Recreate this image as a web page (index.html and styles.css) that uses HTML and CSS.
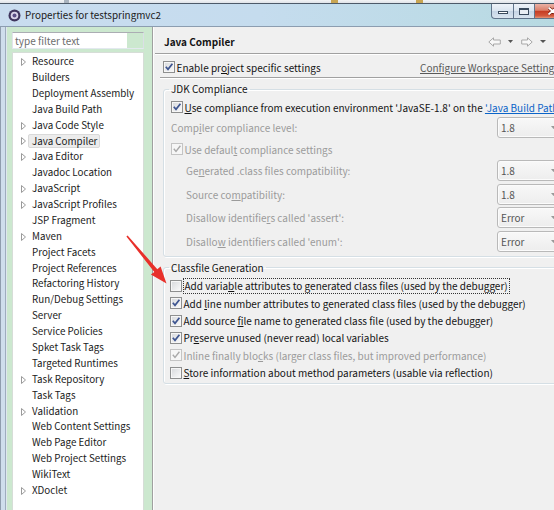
FILE: index.html
```html
<!DOCTYPE html>
<html>
<head>
<meta charset="utf-8">
<link rel="stylesheet" href="styles.css">
</head>
<body>
<div class="win">
  <div class="strip"><span class="tk tk1"></span><span class="tk tk2"></span><span class="tk tk3"></span></div>
  <div class="titlebar">
    <svg class="appicon" width="13" height="13" viewBox="0 0 13 13"><circle cx="6.5" cy="6.5" r="6" fill="#3f355e"/><circle cx="6.5" cy="6.5" r="3.8" fill="#d9d4ea"/><circle cx="6.5" cy="6.5" r="2" fill="#5b4f86"/></svg>
    <span class="title">Properties for testspringmvc2</span>
    <div class="ctrls">
      <span class="btn min"><span class="minbar"></span></span>
      <span class="btn max"><span class="maxbox"></span></span>
      <span class="btn close"><svg width="9" height="8" viewBox="0 0 9 8"><path d="M1 1 L8 7 M8 1 L1 7" stroke="#7a1d10" stroke-width="3.2" stroke-linecap="round"/><path d="M1 1 L8 7 M8 1 L1 7" stroke="#fff" stroke-width="1.8" stroke-linecap="round"/></svg></span>
    </div>
  </div>
  <div class="client">
    <div class="frame-l"></div>
    <div class="left">
      <div class="filter"><span class="ph">type filter text</span><span class="clr"></span></div>
      <ul class="tree">
        <li><svg class="tw" viewBox="0 0 5 8"><path d="M0.5 0.5 L4.5 4 L0.5 7.5 Z" fill="#fff" stroke="#9a9a9a"/></svg>Resource</li>
        <li><span class="tw"></span>Builders</li>
        <li><span class="tw"></span>Deployment Assembly</li>
        <li><span class="tw"></span>Java Build Path</li>
        <li><svg class="tw" viewBox="0 0 5 8"><path d="M0.5 0.5 L4.5 4 L0.5 7.5 Z" fill="#fff" stroke="#9a9a9a"/></svg>Java Code Style</li>
        <li><svg class="tw" viewBox="0 0 5 8"><path d="M0.5 0.5 L4.5 4 L0.5 7.5 Z" fill="#fff" stroke="#9a9a9a"/></svg><span class="sel">Java Compiler</span></li>
        <li><svg class="tw" viewBox="0 0 5 8"><path d="M0.5 0.5 L4.5 4 L0.5 7.5 Z" fill="#fff" stroke="#9a9a9a"/></svg>Java Editor</li>
        <li><span class="tw"></span>Javadoc Location</li>
        <li><svg class="tw" viewBox="0 0 5 8"><path d="M0.5 0.5 L4.5 4 L0.5 7.5 Z" fill="#fff" stroke="#9a9a9a"/></svg>JavaScript</li>
        <li><svg class="tw" viewBox="0 0 5 8"><path d="M0.5 0.5 L4.5 4 L0.5 7.5 Z" fill="#fff" stroke="#9a9a9a"/></svg>JavaScript Profiles</li>
        <li><span class="tw"></span>JSP Fragment</li>
        <li><svg class="tw" viewBox="0 0 5 8"><path d="M0.5 0.5 L4.5 4 L0.5 7.5 Z" fill="#fff" stroke="#9a9a9a"/></svg>Maven</li>
        <li><span class="tw"></span>Project Facets</li>
        <li><span class="tw"></span>Project References</li>
        <li><span class="tw"></span>Refactoring History</li>
        <li><span class="tw"></span>Run/Debug Settings</li>
        <li><span class="tw"></span>Server</li>
        <li><span class="tw"></span>Service Policies</li>
        <li><span class="tw"></span>Spket Task Tags</li>
        <li><span class="tw"></span>Targeted Runtimes</li>
        <li><svg class="tw" viewBox="0 0 5 8"><path d="M0.5 0.5 L4.5 4 L0.5 7.5 Z" fill="#fff" stroke="#9a9a9a"/></svg>Task Repository</li>
        <li><span class="tw"></span>Task Tags</li>
        <li><svg class="tw" viewBox="0 0 5 8"><path d="M0.5 0.5 L4.5 4 L0.5 7.5 Z" fill="#fff" stroke="#9a9a9a"/></svg>Validation</li>
        <li><span class="tw"></span>Web Content Settings</li>
        <li><span class="tw"></span>Web Page Editor</li>
        <li><span class="tw"></span>Web Project Settings</li>
        <li><span class="tw"></span>WikiText</li>
        <li><svg class="tw" viewBox="0 0 5 8"><path d="M0.5 0.5 L4.5 4 L0.5 7.5 Z" fill="#fff" stroke="#9a9a9a"/></svg>XDoclet</li>
      </ul>
    </div>
    <div class="sash"></div>
    <div class="right">
      <div class="head">
        <span class="htitle">Java Compiler</span>
        <span class="nav">
          <svg width="13" height="10" viewBox="0 0 13 10"><path d="M0.8 5 L5.5 0.8 V3 H12.3 V7 H5.5 V9.2 Z" fill="#f8f8f8" stroke="#a8a8a8"/></svg>
          <svg class="dd1" width="5" height="3" viewBox="0 0 5 3"><path d="M0 0 H5 L2.5 3 Z" fill="#555"/></svg>
          <svg class="fwd" width="12" height="10" viewBox="0 0 12 10"><path d="M11.2 5 L6.5 0.8 V3 H0.7 V7 H6.5 V9.2 Z" fill="#f8f8f8" stroke="#a8a8a8"/></svg>
          <svg class="dd2" width="6" height="3" viewBox="0 0 6 3"><path d="M0 0 H6 L3 3 Z" fill="#555"/></svg>
        </span>
      </div>
      <div class="body">
        <div class="enable">
          <span class="cbrow"><span class="cb on"><svg viewBox="0 0 10 10"><path d="M1.8 4.8 L4 7.4 L8.4 1.8" fill="none" stroke="#3e5590" stroke-width="1.7"/></svg></span>Enable pr<u>o</u>ject specific settings</span>
          <span class="link">Configure Workspace Settings...</span>
        </div>
        <div class="sep"></div>
        <fieldset class="grp jdk">
          <legend>JDK Compliance</legend>
          <div class="cbrow r1"><span class="cb on"><svg viewBox="0 0 10 10"><path d="M1.8 4.8 L4 7.4 L8.4 1.8" fill="none" stroke="#3e5590" stroke-width="1.7"/></svg></span><span><u>U</u>se compliance from execution environment 'JavaSE-1.8' on the <span class="blue">'Java Build Path'.</span></span></div>
          <div class="crow r2"><span class="dis">Comp<u>i</u>ler compliance level:</span><span class="combo">1.8<svg class="carr" width="5" height="3" viewBox="0 0 5 3"><path d="M0 0 H5 L2.5 3 Z" fill="#999"/></svg></span></div>
          <div class="cbrow r3"><span class="cb dcb"><svg viewBox="0 0 10 10"><path d="M1.8 4.8 L4 7.4 L8.4 1.8" fill="none" stroke="#a9a9a9" stroke-width="1.4"/></svg></span><span class="dis">Use defaul<u>t</u> compliance settings</span></div>
          <div class="crow r4"><span class="dis ind">Ge<u>n</u>erated .class files compatibility:</span><span class="combo">1.8<svg class="carr" width="5" height="3" viewBox="0 0 5 3"><path d="M0 0 H5 L2.5 3 Z" fill="#999"/></svg></span></div>
          <div class="crow r5"><span class="dis ind">Source co<u>m</u>patibility:</span><span class="combo">1.8<svg class="carr" width="5" height="3" viewBox="0 0 5 3"><path d="M0 0 H5 L2.5 3 Z" fill="#999"/></svg></span></div>
          <div class="crow r5"><span class="dis ind">Disallow identifie<u>r</u>s called 'assert':</span><span class="combo">Error<svg class="carr" width="5" height="3" viewBox="0 0 5 3"><path d="M0 0 H5 L2.5 3 Z" fill="#999"/></svg></span></div>
          <div class="crow r5"><span class="dis ind">Disallo<u>w</u> identifiers called 'enum':</span><span class="combo">Error<svg class="carr" width="5" height="3" viewBox="0 0 5 3"><path d="M0 0 H5 L2.5 3 Z" fill="#999"/></svg></span></div>
        </fieldset>
        <fieldset class="grp cls">
          <legend>Classfile Generation</legend>
          <div class="cbrow c1"><span class="cb"></span><span class="focus">Add varia<u>b</u>le attributes to generated class files (used by the debugger)</span></div>
          <div class="cbrow cn"><span class="cb on"><svg viewBox="0 0 10 10"><path d="M1.8 4.8 L4 7.4 L8.4 1.8" fill="none" stroke="#3e5590" stroke-width="1.7"/></svg></span><span>Add <u>l</u>ine number attributes to generated class files (used by the debugger)</span></div>
          <div class="cbrow cn"><span class="cb on"><svg viewBox="0 0 10 10"><path d="M1.8 4.8 L4 7.4 L8.4 1.8" fill="none" stroke="#3e5590" stroke-width="1.7"/></svg></span><span>Add source <u>f</u>ile name to generated class file (used by the debugger)</span></div>
          <div class="cbrow cn"><span class="cb on"><svg viewBox="0 0 10 10"><path d="M1.8 4.8 L4 7.4 L8.4 1.8" fill="none" stroke="#3e5590" stroke-width="1.7"/></svg></span><span>Pr<u>e</u>serve unused (never read) local variables</span></div>
          <div class="cbrow cn"><span class="cb dcb"><svg viewBox="0 0 10 10"><path d="M1.8 4.8 L4 7.4 L8.4 1.8" fill="none" stroke="#a9a9a9" stroke-width="1.4"/></svg></span><span class="dis">Inline finally blo<u>c</u>ks (larger class files, but improved performance)</span></div>
          <div class="cbrow cn"><span class="cb"></span><span><u>S</u>tore information about method parameters (usable via reflection)</span></div>
        </fieldset>
      </div>
    </div>
  </div>
  <svg class="arrow" width="60" height="62" viewBox="120 228 60 62"><polygon points="127.6,235.4 157.3,269.2 160.6,266.6 166.5,283.5 150.9,274.6 154.3,271.9 126.4,236.6" fill="#e8302a"/></svg>
</div>
</body>
</html>
```
FILE: styles.css
```css
body {
  margin: 0;
  overflow: hidden;
  font-family: "Noto Sans CJK SC", "Noto Sans", sans-serif;
  font-size: 10px;
  color: #141414;
}
.win {
  position: relative;
  width: 554px;
  height: 510px;
  overflow: hidden;
  background: #f0f0f0;
}
.strip {
  height: 3px;
  display: flex;
  background: linear-gradient(#f3f4f6, #dfe3e8);
  border-bottom: 1px solid #4d5a69;
}
.tk { height: 3px; width: 7px; background: #c8a552; }
.tk1 { margin-left: 64px; width: 5px; background: #a9b3be; }
.tk2 { margin-left: 262px; }
.tk3 { margin-left: 78px; }
.titlebar {
  width: 577px;
  height: 23px;
  box-sizing: border-box;
  display: flex;
  align-items: center;
  padding-left: 8px;
  background: linear-gradient(to right, #c9dcef 0%, #c5dcee 45%, #bcdbe6 80%, #b6d9e0 100%);
  border-bottom: 1px solid #8c9db0;
}
.appicon { margin-right: 4px; flex: none; }
.title { line-height: 16px; color: #1a1a1a; font-size: 9.9px; }
.ctrls {
  margin-left: auto;
  align-self: flex-start;
  display: flex;
  height: 15px;
}
.btn {
  box-sizing: border-box;
  height: 15px;
  border: 1px solid #61748b;
  border-top: none;
  display: flex;
  justify-content: center;
  background: linear-gradient(#eef3f9, #dbe5f0 48%, #c6d5e6 52%, #d9e4ef);
}
.min { width: 23px; border-radius: 0 0 0 4px; align-items: flex-end; padding-bottom: 4px; }
.max { width: 21px; border-left: none; align-items: center; }
.close {
  width: 42px;
  border-left: none;
  border-radius: 0 0 4px 0;
  align-items: center;
  justify-content: flex-start;
  padding-left: 13px;
  background: linear-gradient(#eab1a5, #dc7f6a 45%, #c63d24 52%, #d3593d 85%, #e5987a);
}
.minbar { width: 10px; height: 3px; box-sizing: border-box; border: 1px solid #3a4a5d; background: #fff; }
.maxbox { width: 10px; height: 7px; box-sizing: border-box; border: 1px solid #3a4a5d; border-top-width: 2px; background: #e9eef4; }
.client { display: flex; height: 483px; }
.frame-l {
  width: 7px;
  flex: none;
  background: linear-gradient(to right, #8f9dad 0 1px, #cfdeec 1px 5px, #9eadbd 5px 6px, #dfe7ee 6px 7px);
}
.left {
  width: 145px;
  flex: none;
  box-sizing: border-box;
  background: #cce8cf;
  padding: 5px 8px 0 5px;
}
.filter {
  height: 17px;
  box-sizing: border-box;
  border: 1px solid #abadb3;
  border-color: #abadb3 #dbdfe6 #e3e9ef #e2e3ea;
  background: #fff;
  display: flex;
  align-items: center;
}
.ph { flex: 1; padding-left: 2px; color: #6d6d6d; line-height: 15px; }
.clr { width: 16px; height: 15px; background: #cce8cf; }
.tree {
  margin: 3px 0 0;
  padding: 1px 0 0;
  list-style: none;
  background: #fff;
  border: 1px solid #d6ddd7;
  height: 470px;
}
.tree li {
  height: 15.9px;
  line-height: 15.9px;
  display: flex;
  align-items: center;
  padding-left: 8px;
  white-space: nowrap;
  color: #1b1b1b;
  font-size: 9.8px;
}
.tw { width: 5px; height: 8px; margin-right: 6px; flex: none; }
.sel {
  background: #ececec;
  border: 1px solid #d9d9d9;
  border-radius: 2px;
  margin-left: -4px;
  padding: 0 2px 0 3px;
  line-height: 12px;
}
.sash {
  width: 3px;
  flex: none;
  background: linear-gradient(to right, #a0a0a0 0 1px, #fdfdfd 1px 2px, #f0f0f0 2px);
}
.right { flex: 1; min-width: 0; overflow: hidden; background: #f0f0f0; }
.head {
  height: 27px;
  box-sizing: border-box;
  padding: 3px 8px 0 9px;
  display: flex;
  align-items: center;
  border-bottom: 1px solid #a0a0a0;
}
.htitle { font-weight: bold; }
.nav { margin-left: auto; display: flex; align-items: center; }
.dd1 { margin-left: 7px; }
.fwd { margin-left: 8px; }
.dd2 { margin-left: 7px; }
.body { border-top: 1px solid #fff; padding-left: 8px; }
.enable {
  margin-top: 4px;
  height: 16px;
  display: grid;
  grid-template-columns: 257px auto;
  align-items: center;
  white-space: nowrap;
}
.link { color: #595959; text-decoration: underline; }
.sep { margin: 2px 0 0 -3px; border-top: 1px solid #a0a0a0; border-bottom: 1px solid #fff; }
.grp {
  margin: 2px 0 0;
  padding: 0 0 4px 7px;
  border: 1px solid #d5dfe5;
  border-radius: 3px;
  width: 440px;
  min-width: 0;
  box-shadow: inset 1px 1px 0 #fff, 1px 1px 0 #fff;
}
.grp legend { padding: 0 2px; margin-left: -2px; line-height: 16px; }
.cls { margin-top: 3px; padding: 0 0 2px 6px; }
.cls legend { margin-left: -1px; }
.cbrow { display: flex; align-items: center; height: 16px; white-space: nowrap; }
.crow {
  display: grid;
  grid-template-columns: 326px 64px;
  align-items: center;
  height: 21px;
  white-space: nowrap;
}
.r1 { margin-top: 2px; }
.r2 { margin-top: 2px; }
.r3 { margin-top: 3px; }
.r4 { margin-top: 3px; }
.r5 { margin-top: 2.6px; }
.c1 { margin-top: 2px; }
.cn { margin-top: 1.4px; }
.ind { padding-left: 15px; }
.dis { color: #9b9b9b; }
.blue { color: #0b64c8; text-decoration: underline; }
.cb {
  width: 10px;
  height: 10px;
  flex: none;
  border: 1px solid #8e8f8f;
  margin-right: 1.5px;
  background: linear-gradient(135deg, #d6d8db, #fbfbfb);
  box-shadow: inset 0 0 0 1px #f6f6f6;
  display: flex;
}
.cb svg { width: 10px; height: 10px; }
.dcb { border-color: #c4c4c4; background: #f6f6f6; }
.focus { outline: 1px dotted #333; padding: 0 1px; line-height: 14px; }
.combo {
  box-sizing: border-box;
  height: 21px;
  border: 1px solid #b9b9b9;
  border-radius: 3px;
  background: linear-gradient(#f8f8f8, #ededed);
  box-shadow: inset 0 0 0 1px #fbfbfb;
  display: flex;
  align-items: center;
  padding-left: 3px;
  color: #555;
}
.carr { margin-left: auto; margin-right: 4px; }
.arrow { position: absolute; left: 120px; top: 228px; }
```
